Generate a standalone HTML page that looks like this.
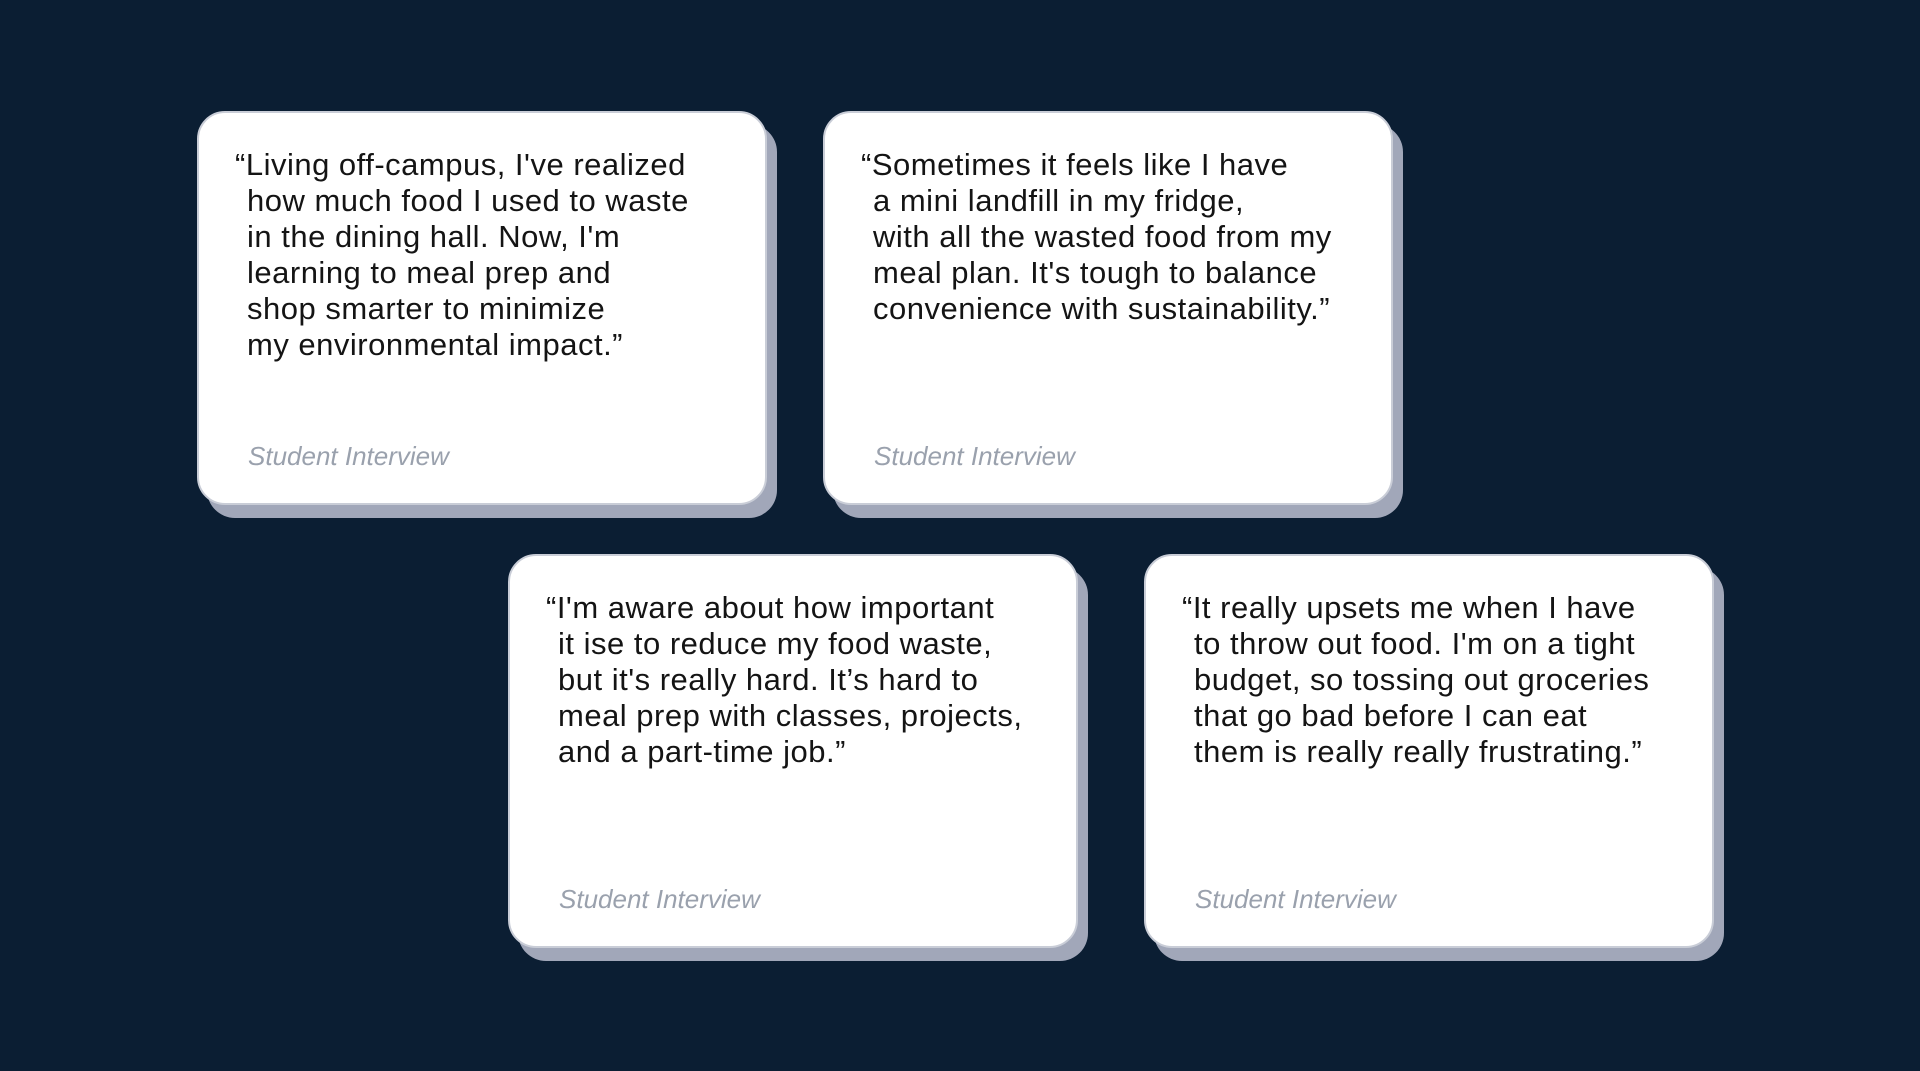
<!DOCTYPE html>
<html><head><meta charset="utf-8"><style>
html,body{margin:0;padding:0}
body{width:1920px;height:1071px;background:#0b1e33;position:relative;overflow:hidden;font-family:"Liberation Sans",sans-serif}
.card{position:absolute;width:570px;height:394px;background:#fff;border-radius:28px;box-sizing:border-box;border:2px solid #c9cdd7;box-shadow:10px 13px 0 #a1a7b9}
.q{position:absolute;left:36px;top:34px;font-size:31px;letter-spacing:0.5px;line-height:36px;color:#141414;white-space:nowrap}
.q div{padding-left:12px}
.q div:first-child{padding-left:0}
.l{position:absolute;left:49px;top:328px;font-size:26px;font-style:italic;color:#9aa1ad;line-height:30px}
</style></head><body>
<div class="card" style="left:197px;top:111px">
<div class="q"><div>“Living off-campus, I've realized</div><div>how much food I used to waste</div><div>in the dining hall. Now, I'm</div><div>learning to meal prep and</div><div>shop smarter to minimize</div><div>my environmental impact.”</div></div>
<div class="l">Student Interview</div></div>
<div class="card" style="left:823px;top:111px">
<div class="q"><div>“Sometimes it feels like I have</div><div>a mini landfill in my fridge,</div><div>with all the wasted food from my</div><div>meal plan. It's tough to balance</div><div>convenience with sustainability.”</div></div>
<div class="l">Student Interview</div></div>
<div class="card" style="left:508px;top:554px">
<div class="q"><div>“I'm aware about how important</div><div>it ise to reduce my food waste,</div><div>but it's really hard. It’s hard to</div><div>meal prep with classes, projects,</div><div>and a part-time job.”</div></div>
<div class="l">Student Interview</div></div>
<div class="card" style="left:1144px;top:554px">
<div class="q"><div>“It really upsets me when I have</div><div>to throw out food. I'm on a tight</div><div>budget, so tossing out groceries</div><div>that go bad before I can eat</div><div>them is really really frustrating.”</div></div>
<div class="l">Student Interview</div></div>
</body></html>
